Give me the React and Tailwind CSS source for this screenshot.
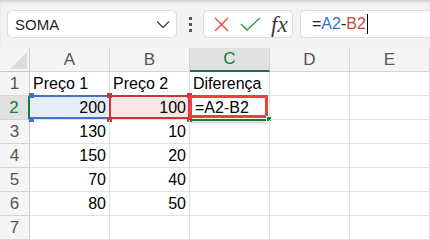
import React from "react";

const F = { fontFamily: '"Liberation Sans", Arial, sans-serif' };

function Corner({ className }) {
  return <div className={"absolute w-[5px] h-[5px] " + className} />;
}

export default function App() {
  const cols = ["A", "B", "C", "D", "E"];
  const data = [
    ["Preço 1", "Preço 2", "Diferença"],
    ["200", "100", "=A2-B2"],
    ["130", "10", ""],
    ["150", "20", ""],
    ["70", "40", ""],
    ["80", "50", ""],
    ["", "", ""],
  ];
  return (
    <div className="w-[430px] h-[240px] overflow-hidden bg-white" style={F}>
      {/* toolbar */}
      <div className="h-[48px] flex items-center bg-[#f3f3f3] shadow-[inset_0_3px_3px_-1px_rgba(0,0,0,0.14)]">
        <div className="ml-[7px] w-[170px] h-[28px] bg-white border border-[#dcdcdc] rounded-[5px] flex items-center justify-between pl-[7px] pr-[6px]">
          <span className="text-[15px] text-[#1f1f1f] leading-none">SOMA</span>
          <svg width="14" height="9" viewBox="0 0 14 9">
            <path d="M1 1.5 L7 7.5 L13 1.5" fill="none" stroke="#444" strokeWidth="1.3" />
          </svg>
        </div>
        <div className="ml-[12px] w-[3px] flex flex-col gap-[3px]">
          <div className="w-[3px] h-[3px] bg-[#555]" />
          <div className="w-[3px] h-[3px] bg-[#555]" />
          <div className="w-[3px] h-[3px] bg-[#555]" />
        </div>
        <div className="ml-[11px] w-[90px] h-[28px] bg-white border border-[#dcdcdc] rounded-[5px] flex items-center pl-[10px]">
          <svg width="15" height="15" viewBox="0 0 15 15">
            <path d="M1 1 L14 14 M14 1 L1 14" stroke="#e8453c" strokeWidth="1.4" fill="none" />
          </svg>
          <svg className="ml-[11px]" width="21" height="14" viewBox="0 0 21 14">
            <path d="M1 7 L7 13 L20 1" stroke="#3c9d4e" strokeWidth="1.5" fill="none" />
          </svg>
          <span
            className="ml-[10px] text-[23px] leading-none italic text-[#3b3b3b]"
            style={{ fontFamily: '"Liberation Serif", "Times New Roman", serif' }}
          >
            fx
          </span>
        </div>
        <div className="ml-[7px] flex-1 h-[28px] bg-white border border-[#dcdcdc] border-r-0 rounded-l-[5px] flex items-center pl-[11px]">
          <span className="text-[16px] leading-none text-[#1f1f1f]">=</span>
          <span className="text-[16px] leading-none text-[#2f74d0]">A2</span>
          <span className="text-[16px] leading-none text-[#1f1f1f]">-</span>
          <span className="text-[16px] leading-none text-[#c8483a]">B2</span>
          <div className="ml-[1px] w-[1px] h-[20px] bg-black" />
        </div>
      </div>
      {/* header row */}
      <div className="flex h-[24px]">
        <div className="relative w-[30px] h-[24px] bg-[#f5f5f5] border-r border-b border-[#c9c9c9]">
          <svg className="absolute right-[2px] bottom-[2px]" width="17" height="17" viewBox="0 0 17 17">
            <path d="M17 0 L17 17 L0 17 Z" fill="#dcdcdc" />
          </svg>
        </div>
        {cols.map((c) => (
          <div
            key={c}
            className={
              "w-[80px] h-[24px] flex items-center justify-center text-[17px] border-r " +
              (c === "C"
                ? "bg-[#e1e1e1] text-[#107c41] border-b-2 border-b-[#107c41] border-r-[#d4d4d4]"
                : "bg-[#f5f5f5] text-[#555] border-b border-[#d4d4d4]")
            }
          >
            {c}
          </div>
        ))}
      </div>
      {/* rows */}
      {data.map((row, i) => (
        <div key={i} className="flex h-[24px]">
          <div
            className={
              "w-[30px] h-[24px] flex items-center justify-center text-[17px] border-b border-[#d4d4d4] " +
              (i === 1
                ? "bg-[#e1e1e1] text-[#107c41] border-r-2 border-r-[#107c41]"
                : "bg-[#f5f5f5] text-[#555] border-r border-r-[#c9c9c9]")
            }
          >
            {i + 1}
          </div>
          {[0, 1, 2, 3, 4].map((j) => {
            const v = row[j] || "";
            const isNum = /^\d+$/.test(v);
            let bg = "";
            if (i === 1 && j === 0) bg = "bg-[#e7edf7]";
            if (i === 1 && j === 1) bg = "bg-[#f9e7e7]";
            return (
              <div
                key={j}
                className={
                  "relative w-[80px] h-[24px] border-r border-b border-[#e1e1e1] flex items-center text-[16px] text-black whitespace-nowrap " +
                  (isNum ? "justify-end pr-[3px] " : "justify-start pl-[3px] ") +
                  bg
                }
              >
                <span className={i === 1 && j === 2 ? "relative z-10 pl-[2px]" : ""}>{v}</span>
                {i === 1 && j === 0 && (
                  <>
                    <div className="absolute left-0 right-[-1px] top-[-1px] bottom-0 border-y-2 border-[#4472c4]" />
                    <Corner className="left-[-1px] top-[-3px] bg-[#4472c4]" />
                    <Corner className="left-[-1px] bottom-[-3px] bg-[#4472c4]" />
                  </>
                )}
                {i === 1 && j === 1 && (
                  <>
                    <div className="absolute left-[-1px] right-[-1px] top-[-1px] bottom-0 border-2 border-[#c8363a]" />
                    <Corner className="left-[-3px] top-[-3px] bg-[#c8363a]" />
                    <Corner className="left-[-3px] bottom-[-3px] bg-[#c8363a]" />
                    <Corner className="right-[-3px] top-[-3px] bg-[#c8363a]" />
                    <Corner className="right-[-3px] bottom-[-3px] bg-[#c8363a]" />
                  </>
                )}
                {i === 1 && j === 2 && (
                  <>
                    <div className="absolute left-0 right-[1px] top-[23px] h-[2px] bg-[#107c41] shadow-[0_2px_3px_rgba(0,0,0,0.25)]" />
                    <div className="absolute left-[-1px] right-[1px] top-[-1px] bottom-[1px] border-[3px] border-[#ef3e3e]" />
                    <div className="absolute right-[-3px] bottom-[-3px] w-[6px] h-[6px] bg-[#107c41] border border-white" />
                  </>
                )}
              </div>
            );
          })}
        </div>
      ))}
    </div>
  );
}
